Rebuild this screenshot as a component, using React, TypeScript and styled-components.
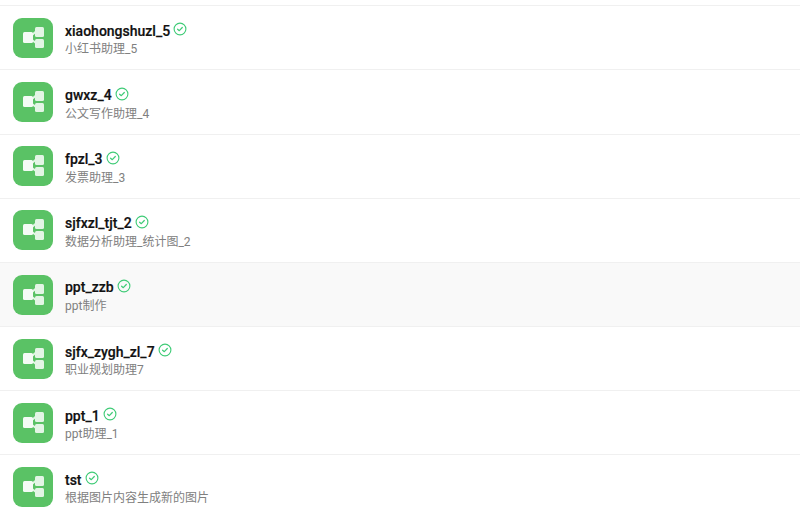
import React from "react";
import styled, { createGlobalStyle } from "styled-components";

const Global = createGlobalStyle`
  html, body { margin: 0; padding: 0; background: #fff; overflow: hidden; }
  body { font-family: Roboto, "Noto Sans CJK SC", sans-serif; }
`;
const List = styled.div`
  padding-top: 5.3px;
  display: flex;
  flex-direction: column;
`;
const Row = styled.div<{ $active?: boolean }>`
  height: 64.14px;
  box-sizing: border-box;
  border-top: 1.5px solid #f0f0f0;
  padding: 11.8px 13px 0;
  display: flex;
  gap: 12px;
  background: ${(p) => (p.$active ? "#f9f9f9" : "#fff")};
`;
const Tile = styled.div`
  width: 40px;
  height: 40px;
  border-radius: 9px;
  background: #5ac265;
  flex: none;
`;
const Info = styled.div`
  display: flex;
  flex-direction: column;
  min-width: 0;
  padding-top: 2.4px;
`;
const NameLine = styled.div`
  display: flex;
  align-items: center;
  gap: 3px;
  height: 21px;
`;
const Name = styled.span`
  font-size: 14px;
  font-weight: 500;
  color: #111;
  -webkit-text-stroke: 0.2px #111;
`;
const Desc = styled.div`
  font-size: 12px;
  line-height: 16px;
  color: #808080;
`;
const CheckIcon = styled.svg`
  flex: none;
  margin-top: -3px;
`;
const Check = () => (
  <CheckIcon width="14" height="14" viewBox="0 0 14 14" fill="none">
    <circle cx="7" cy="7" r="5.9" stroke="#3ecb76" strokeWidth="1.1" />
    <path d="M4.6 7.2 L6.3 8.7 L9.3 5.5" stroke="#3ecb76" strokeWidth="1.2" strokeLinecap="round" strokeLinejoin="round" />
  </CheckIcon>
);
const Glyph = () => (
  <svg width="40" height="40" viewBox="0 0 40 40">
    <path d="M19 17 L23 13.5 M19 22 L23 25" stroke="#e3f5e5" strokeWidth="2" fill="none" />
    <rect x="10" y="14" width="10" height="11" rx="1.5" fill="#f4fbf5" />
    <rect x="22" y="9" width="9" height="10" rx="1.5" fill="#e3f5e5" />
    <rect x="22" y="21" width="9" height="9" rx="1.5" fill="#e3f5e5" />
  </svg>
);
const items = [
  ["xiaohongshuzl_5", "小红书助理_5"],
  ["gwxz_4", "公文写作助理_4"],
  ["fpzl_3", "发票助理_3"],
  ["sjfxzl_tjt_2", "数据分析助理_统计图_2"],
  ["ppt_zzb", "ppt制作"],
  ["sjfx_zygh_zl_7", "职业规划助理7"],
  ["ppt_1", "ppt助理_1"],
  ["tst", "根据图片内容生成新的图片"],
];
export default function App() {
  return (
    <>
      <Global />
      <List>
        {items.map(([n, d]) => (
          <Row key={n} $active={n === "ppt_zzb"}>
            <Tile><Glyph /></Tile>
            <Info>
              <NameLine><Name>{n}</Name><Check /></NameLine>
              <Desc>{d}</Desc>
            </Info>
          </Row>
        ))}
      </List>
    </>
  );
}
